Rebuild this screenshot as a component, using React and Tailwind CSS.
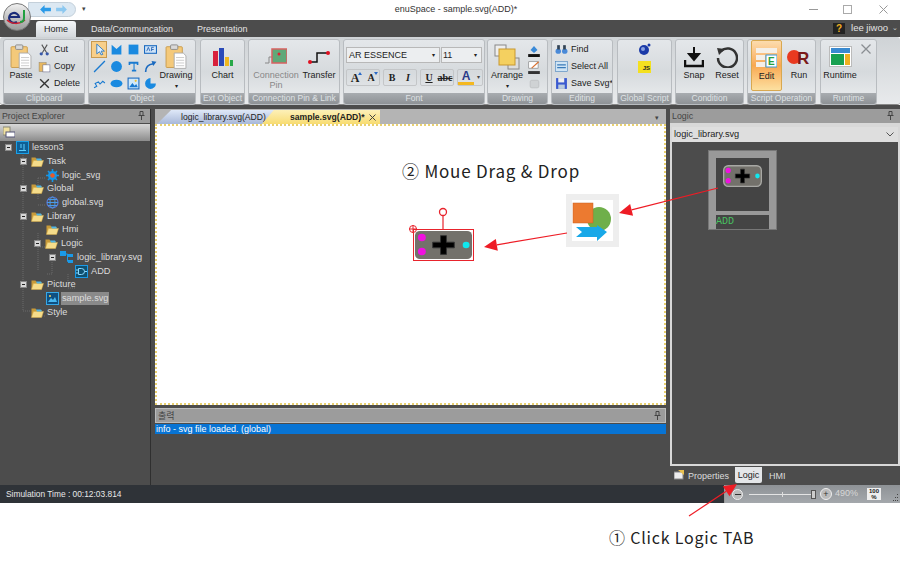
import React from "react";

const Clip = ({ s = 30 }) => (
  <svg width={s} height={s * 1.15} viewBox="0 0 24 28">
    <rect x="1" y="3" width="18" height="23" rx="1" fill="#f4c97a" stroke="#c89a4a" />
    <rect x="6" y="1" width="8" height="5" rx="1" fill="#d9d9d9" stroke="#888" />
    <path d="M10 10h10l3 3v14H10z" fill="#fff" stroke="#aaa" />
    <path d="M12 15h9M12 18h9M12 21h9M12 24h9" stroke="#c8c8c8" />
  </svg>
);

const Folder = () => (
  <svg width="13" height="11" viewBox="0 0 13 11" className="shrink-0">
    <path d="M0.5 1.5h4l1 1.5h5v7h-10z" fill="#c79a3a" />
    <path d="M2.5 4.5h10l-2 6h-10z" fill="#f5dc8a" stroke="#d8ae4a" strokeWidth=".5" />
    <path d="M5 2.5h5l1 2H6z" fill="#4fb6e8" />
  </svg>
);

const Pin = () => (
  <svg width="7" height="9" viewBox="0 0 7 9" fill="none" stroke="#444" className="mt-[2px]">
    <path d="M2 .5h3v4H2zM.5 4.500h6M3.500 5v4" />
  </svg>
);

const IcoProject = () => (
  <svg width="13" height="13" viewBox="0 0 13 13" className="shrink-0">
    <rect x=".5" y=".5" width="12" height="12" fill="#0f5f95" stroke="#19a0e8" />
    <path d="M3 9.500h7M8 3v6.500M5 3v4" stroke="#5fd0ff" strokeWidth="1" fill="none" />
  </svg>
);
const IcoTask = () => (
  <svg width="13" height="13" viewBox="0 0 13 13" className="shrink-0">
    <circle cx="6.5" cy="6.5" r="4.5" fill="#1596e8" />
    <path d="M6.5 0v13M0 6.500h13M2 2l9 9M11 2l-9 9" stroke="#1596e8" strokeWidth="1.6" />
    <circle cx="6.5" cy="6.5" r="2.3" fill="#e85a2a" />
  </svg>
);
const IcoGlobe = () => (
  <svg width="13" height="13" viewBox="0 0 13 13" fill="none" stroke="#4a9ae8" className="shrink-0">
    <circle cx="6.5" cy="6.5" r="5.5" stroke="#5a78d8" strokeWidth="1.2" />
    <ellipse cx="6.5" cy="6.5" rx="2.5" ry="5.5" />
    <path d="M1 6.500h11M2 3.500h9M2 9.500h9" />
  </svg>
);
const IcoLib = () => (
  <svg width="14" height="13" viewBox="0 0 14 13" className="shrink-0">
    <rect x="0" y="0" width="6" height="5" fill="#1a9ae8" />
    <rect x="8" y="3" width="5" height="3" fill="#1a9ae8" />
    <rect x="8" y="9" width="5" height="3" fill="#1a9ae8" />
    <path d="M6 3h1.500v7.500H8" stroke="#1a9ae8" fill="none" />
  </svg>
);
const IcoAdd = () => (
  <svg width="13" height="13" viewBox="0 0 13 13" fill="none" className="shrink-0">
    <rect x=".5" y=".5" width="12" height="12" fill="#0f5070" stroke="#1a9ae8" />
    <path d="M3.500 3.500h3a3 3 0 010 6h-3zM1 5h2.500M1 8h2.500M9.500 6.500H12" stroke="#8ad8ff" />
  </svg>
);
const IcoPic = () => (
  <svg width="13" height="13" viewBox="0 0 13 13" className="shrink-0">
    <rect x=".5" y=".5" width="12" height="12" fill="#0f4f80" stroke="#35a8e8" />
    <path d="M2 10l3-4 2 2 2-3 2 5z" fill="#48b8f0" />
    <circle cx="4" cy="4" r="1" fill="#f0d060" />
  </svg>
);

const TREE = [
  { t: "lesson3", p: "pl-[5px]", box: true, i: <IcoProject /> },
  { t: "Task", p: "pl-[20px]", box: true, i: <Folder /> },
  { t: "logic_svg", p: "pl-[46px]", i: <IcoTask /> },
  { t: "Global", p: "pl-[20px]", box: true, i: <Folder /> },
  { t: "global.svg", p: "pl-[46px]", i: <IcoGlobe /> },
  { t: "Library", p: "pl-[20px]", box: true, i: <Folder /> },
  { t: "Hmi", p: "pl-[46px]", i: <Folder /> },
  { t: "Logic", p: "pl-[34px]", box: true, i: <Folder /> },
  { t: "logic_library.svg", p: "pl-[49px]", box: true, i: <IcoLib /> },
  { t: "ADD", p: "pl-[75px]", i: <IcoAdd /> },
  { t: "Picture", p: "pl-[20px]", box: true, i: <Folder /> },
  { t: "sample.svg", p: "pl-[46px]", i: <IcoPic />, sel: true },
  { t: "Style", p: "pl-[31px]", i: <Folder /> },
];

const Group = ({ w, label, children, cls = "" }) => (
  <div className={`${w} ${cls} h-[66px] flex flex-col rounded-[3px] border border-[#b8bcc0] bg-gradient-to-b from-[#e4e7ea] via-[#d6dadd] to-[#eceef0] overflow-hidden`}>
    <div className="flex-1 flex min-h-0">{children}</div>
    <div className="h-[11px] shrink-0 bg-gradient-to-b from-[#a8acb0] to-[#8e9296] text-[#dfe2e5] text-[8.500px] leading-[11px] text-center whitespace-nowrap">{label}</div>
  </div>
);

const Big = ({ icon, label, sub, muted, w = "w-[40px]", cls = "" }) => (
  <div className={`${w} ${cls} shrink-0 flex flex-col items-center pt-[4px] text-[9px] leading-[10px] ${muted ? "text-[#888]" : "text-[#222]"}`}>
    <div className="h-[25px] flex items-center justify-center">{icon}</div>
    <div className="mt-[1px] whitespace-nowrap">{label}</div>
    {sub && <div className="whitespace-nowrap">{sub}</div>}
  </div>
);

const Small = ({ icon, label }) => (
  <div className="h-[17px] flex items-center gap-[3px] text-[9px] text-[#222] whitespace-nowrap">
    <span className="w-[13px] flex justify-center">{icon}</span>
    {label}
  </div>
);

const I = ({ children, s = 13, v = 24 }) => <svg width={s} height={s} viewBox={`0 0 ${v} ${v}`}>{children}</svg>;

const Obj = ({ children, on }) => (
  <div className={`w-[16px] h-[17px] flex items-center justify-center ${on ? "bg-[#f8cf8a] border border-[#c89a50]" : ""}`}>{children}</div>
);

const FontBtn = ({ children, cls = "", up, down }) => (
  <span className={`relative w-[16px] h-[15px] flex items-center justify-center text-[10px] font-bold text-[#222] ${cls}`}>
    {children}
    {up && <svg className="absolute right-[1px] top-[2px]" width="4" height="3"><path d="M0 3l2-3 2 3z" fill="#2a6ac8" /></svg>}
    {down && <svg className="absolute right-[1px] top-[2px]" width="4" height="3"><path d="M0 0l2 3 2-3z" fill="#2a6ac8" /></svg>}
  </span>
);

const NodeArt = ({ big }) => (
  <svg width="100%" height="100%" viewBox="0 0 60 32" preserveAspectRatio="none">
    <rect x="1" y="1" width="58" height="30" rx={big ? 5 : 7} fill="#73716b" stroke={big ? "none" : "#a8a8a4"} strokeWidth="2" />
    <circle cx="8" cy="8" r="4" fill="#f010e0" />
    <circle cx="8" cy="23" r="4" fill="#f010e0" />
    <circle cx="53" cy="16" r="3.500" fill="#10e8ee" />
    <path d="M27 6h6v7h8v6h-8v7h-6v-7h-8v-6h8z" fill="#000" stroke="#333" />
  </svg>
);

const Arrow = ({ x1, y1, x2, y2 }) => {
  const a = Math.atan2(y2 - y1, x2 - x1);
  const L = 13, W = 6;
  const bx = x2 - L * Math.cos(a), by = y2 - L * Math.sin(a);
  const nx = -Math.sin(a) * W, ny = Math.cos(a) * W;
  return (
    <g>
      <line x1={x1} y1={y1} x2={bx} y2={by} stroke="#ee1c25" strokeWidth="1.2" />
      <polygon points={`${x2},${y2} ${bx + nx},${by + ny} ${bx - nx},${by - ny}`} fill="#ee1c25" />
    </g>
  );
};

export default function App() {
  return (
    <div className="relative w-[900px] h-[561px] bg-white overflow-hidden font-['Liberation_Sans',sans-serif]">
      {/* title bar */}
      <div className="relative h-[20px] flex items-center justify-center text-[9px] text-[#333]">
        <div className="ml-[12px]">enuSpace - sample.svg(ADD)*</div>
        <div className="absolute left-[28px] top-[2px] w-[48px] h-[15px] rounded-r-full bg-[#dce8f2] border border-[#c4d0da] flex items-center gap-[5px] pl-[11px]">
          <svg width="11" height="9" viewBox="0 0 12 10"><path d="M0 5l5-5v3h7v4H5v3z" fill="#2a9ae8" /></svg>
          <svg width="11" height="9" viewBox="0 0 12 10"><path d="M12 5L7 0v3H0v4h7v3z" fill="#8cc8f0" /></svg>
        </div>
        <div className="absolute left-[82px] top-[5px] text-[7px] leading-[8px] text-[#444]">▾</div>
        <svg className="absolute left-[809px] top-[9px]" width="9" height="2"><rect width="9" height="1" fill="#999" /></svg>
        <div className="absolute left-[843px] top-[5px] w-[9px] h-[9px] border border-[#aaa]" />
        <svg className="absolute left-[879px] top-[5px]" width="9" height="9" viewBox="0 0 9 9"><path d="M.5.5l8 8M8.500.5l-8 8" stroke="#999" /></svg>
      </div>

      {/* tabs row */}
      <div className="relative h-[17px] bg-[#4c4c4c] flex items-end text-[9px] text-[#e4e4e4]">
        <div className="ml-[36px] w-[40px] h-[16px] bg-gradient-to-b from-[#f4f6f8] to-[#d4d8dc] rounded-t-[3px] text-[#222] text-center leading-[16px]">Home</div>
        <div className="ml-[15px] h-[16px] leading-[16px] whitespace-nowrap">Data/Communcation</div>
        <div className="ml-[24px] h-[16px] leading-[16px] whitespace-nowrap">Presentation</div>
        <div className="ml-auto mr-[12px] h-[17px] flex items-center gap-[6px]">
          <span className="w-[12px] h-[11px] bg-[#222] text-[#f0b020] font-bold text-[10px] leading-[11px] text-center">?</span>
          <span className="text-[9.500px]">lee jiwoo</span>
        </div>
        <div className="absolute right-[2px] top-[3px] text-[7px] leading-[10px] text-[#ccc]">⌄</div>
      </div>

      {/* ribbon */}
      <div className="h-[68px] bg-gradient-to-b from-[#cfd3d6] to-[#e8eaec] rounded-[3px] flex pt-[2px] border-b border-[#888]">
        <Group w="w-[82px]" cls="ml-[3px]" label="Clipboard">
          <Big w="w-[34px]" icon={<Clip s={22} />} label="Paste" />
          <div className="pt-[1px]">
            <Small label="Cut" icon={<I><path d="M7 3l9 15M17 3L8 18" stroke="#555" strokeWidth="2" /><circle cx="6" cy="20" r="3" fill="#3858a8" /><circle cx="17" cy="20" r="3" fill="#3858a8" /></I>} />
            <Small label="Copy" icon={<I><rect x="2" y="5" width="13" height="16" fill="#e8b860" stroke="#986" /><rect x="9" y="9" width="13" height="13" fill="#fff" stroke="#668" /></I>} />
            <Small label="Delete" icon={<I><path d="M4 4l16 16M20 4L4 20" stroke="#333" strokeWidth="2.500" /></I>} />
          </div>
        </Group>
        <Group w="w-[108px]" cls="ml-[3px]" label="Object">
          <div className="grid grid-cols-4 gap-x-[1px] ml-[2px] mt-[1px] content-start h-[52px]">
            <Obj on><I><path d="M7 2v18l5-4 3 6 3-1-3-6h6z" fill="#dfefff" stroke="#1a70c0" strokeWidth="1.500" /></I></Obj>
            <Obj><I><path d="M3 3l9 8 9-8v18H3z" fill="#1a8ae0" /></I></Obj>
            <Obj><I><rect x="3" y="3" width="18" height="18" fill="#1a8ae0" /></I></Obj>
            <Obj><I><rect x="1" y="5" width="22" height="14" fill="#cfe4f8" stroke="#1a6ac0" strokeWidth="2" /><path d="M5 15l3-7 3 7M14 8v7M14 8h4M14 12h4" stroke="#1a5ab0" strokeWidth="1.500" fill="none" /></I></Obj>
            <Obj><I><path d="M2 22L22 2" stroke="#1a7ad0" strokeWidth="2.500" /></I></Obj>
            <Obj><I><circle cx="12" cy="12" r="10" fill="#1a8ae0" /></I></Obj>
            <Obj><I><path d="M3 3h18v6h-3V7h-4v11h3v3H9v-3h3V7H6v2H3z" fill="#1a7ad0" /></I></Obj>
            <Obj><I><path d="M3 22c0-10 5-14 14-15" stroke="#1a6ac0" strokeWidth="3" fill="none" /><path d="M23 3l-9-1 3 9z" fill="#1a6ac0" /></I></Obj>
            <Obj><I><path d="M2 20l5-3-3-5 6-3 3 4 5-5 4 3" stroke="#1a7ad0" strokeWidth="2" fill="none" /></I></Obj>
            <Obj><I><ellipse cx="12" cy="12" rx="11" ry="7" fill="#1a8ae0" /></I></Obj>
            <Obj><I><rect x="2" y="2" width="20" height="20" fill="#cfe8fa" stroke="#1a6ac0" strokeWidth="2" /><path d="M4 19l6-8 4 5 3-3 3 6z" fill="#1a7ad0" /><circle cx="16" cy="7" r="2" fill="#f0c030" /></I></Obj>
            <Obj><I><path d="M12 2a10 10 0 1010 10H12z" fill="#1a8ae0" /></I></Obj>
          </div>
          <Big w="w-[36px]" icon={<Clip s={22} />} label="Drawing" sub={<span className="text-[6px]">▾</span>} />
        </Group>
        <Group w="w-[45px]" cls="ml-[4px]" label="Ext Object">
          <Big w="w-full" icon={<svg width="20" height="18" viewBox="0 0 20 18"><rect x="0" y="3" width="5" height="15" fill="#d8203c" /><rect x="6" y="0" width="5" height="18" fill="#2a4ab8" /><rect x="12" y="9" width="4" height="9" fill="#f0b820" /><rect x="17" y="12" width="3" height="6" fill="#28a848" /></svg>} label="Chart" />
        </Group>
        <Group w="w-[92px]" cls="ml-[3px]" label="Connection Pin & Link">
          <Big w="w-[48px]" cls="ml-[3px]" muted icon={<svg width="22" height="18" viewBox="0 0 22 18"><path d="M0 15h4V9h3" stroke="#888" fill="none" /><rect x="7" y="1" width="15" height="14" fill="#5fa878" stroke="#d86060" strokeWidth="1.500" /><circle cx="14" cy="6" r="1.500" fill="#e02030" /></svg>} label="Connection" sub="Pin" />
          <Big w="w-[38px]" icon={<svg width="22" height="14" viewBox="0 0 22 14"><path d="M2 12h7V3h11" stroke="#111" strokeWidth="1.500" fill="none" /><circle cx="2" cy="12" r="2" fill="#e01020" /><circle cx="20" cy="3" r="2" fill="#e01020" /></svg>} label="Transfer" />
        </Group>
        <Group w="w-[142px]" cls="ml-[3px]" label="Font">
          <div className="pl-[2px] pt-[7px]">
            <div className="flex gap-[1px]">
              <div className="w-[94px] h-[16px] bg-[#eceef0] border border-[#b8b8b8] text-[9px] leading-[14px] pl-[2px] text-[#222] flex justify-between pr-[4px]"><span>AR ESSENCE</span><span className="text-[6px]">▾</span></div>
              <div className="w-[41px] h-[16px] bg-[#eceef0] border border-[#b8b8b8] text-[9px] leading-[14px] pl-[1px] text-[#222] flex justify-between pr-[4px]"><span>11</span><span className="text-[6px]">▾</span></div>
            </div>
            <div className="flex gap-[3px] mt-[6px] font-['Liberation_Serif',serif]">
              <div className="flex border border-[#c4c6c8] rounded-[2px]"><FontBtn cls="text-[12px]" up>A</FontBtn><FontBtn down>A</FontBtn></div>
              <div className="flex border border-[#c4c6c8] rounded-[2px]"><FontBtn>B</FontBtn><FontBtn cls="italic">I</FontBtn></div>
              <div className="flex border border-[#c4c6c8] rounded-[2px]"><FontBtn cls="underline">U</FontBtn><FontBtn cls="line-through">abc</FontBtn></div>
              <div className="flex border border-[#c4c6c8] rounded-[2px] w-[26px] items-center"><span className="w-[16px] text-center text-[12px] font-bold leading-[12px] text-[#2a3a88] border-b-[3px] border-[#f4b820] font-['Liberation_Sans',sans-serif]">A</span><span className="text-[6px] ml-[3px] text-[#444]">▾</span></div>
            </div>
          </div>
        </Group>
        <Group w="w-[61px]" cls="ml-[2px]" label="Drawing">
          <Big w="w-[38px]" icon={<svg width="26" height="26" viewBox="0 0 26 26"><rect x="1" y="1" width="11" height="11" fill="#eee" stroke="#888" /><rect x="14" y="14" width="11" height="11" fill="#ddd" stroke="#888" /><rect x="5" y="5" width="16" height="16" fill="#f4d060" stroke="#c89830" /></svg>} label="Arrange" sub={<span className="text-[6px]">▾</span>} />
          <div className="pt-[1px] flex flex-col">
            <Obj><I s={14}><path d="M6 12l6-7 6 7-6 5z" fill="#3a8ad8" /><rect x="2" y="19" width="20" height="5" fill="#111" /></I></Obj>
            <Obj><I s={14}><rect x="3" y="3" width="16" height="11" fill="#fff" stroke="#777" /><path d="M8 14L20 3" stroke="#d87030" strokeWidth="2" /><rect x="2" y="19" width="20" height="5" fill="#333" /></I></Obj>
            <Obj><I s={13}><rect x="4" y="6" width="16" height="14" rx="3" fill="#cfd2d4" stroke="#b0b2b4" /></I></Obj>
          </div>
        </Group>
        <Group w="w-[62px]" cls="ml-[3px]" label="Editing">
          <div className="pl-[3px] pt-[1px]">
            <Small label="Find" icon={<I><circle cx="6" cy="15" r="5" fill="#4a8ad8" /><circle cx="18" cy="15" r="5" fill="#4a8ad8" /><rect x="4" y="4" width="5" height="8" fill="#345" /><rect x="15" y="4" width="5" height="8" fill="#345" /></I>} />
            <Small label="Select All" icon={<I><rect x="1" y="3" width="22" height="18" fill="#cfe4f4" stroke="#3a7ab8" /><path d="M4 9h16M4 14h16" stroke="#3a7ab8" strokeWidth="2" /></I>} />
            <Small label="Save Svg*" icon={<I><rect x="2" y="2" width="20" height="20" fill="#3a5ad0" /><rect x="6" y="2" width="11" height="8" fill="#eee" /><rect x="6" y="14" width="12" height="8" fill="#bcd" /></I>} />
          </div>
        </Group>
        <Group w="w-[55px]" cls="ml-[4px]" label="Global Script">
          <div className="w-full flex flex-col items-center pt-[3px] gap-[6px]">
            <svg width="12" height="12" viewBox="0 0 12 12"><circle cx="5" cy="7" r="5" fill="#1a3aa8" /><circle cx="4" cy="6" r="2" fill="#88a0e0" /><circle cx="10" cy="2" r="1.500" fill="#1a3aa8" /></svg>
            <div className="w-[13px] h-[12px] bg-[#f4e020] text-[6px] font-bold leading-[14px] text-right pr-[1px] text-[#222]">JS</div>
          </div>
        </Group>
        <Group w="w-[69px]" cls="ml-[3px]" label="Condition">
          <Big w="w-[36px]" icon={<svg width="20" height="22" viewBox="0 0 20 22"><path d="M10 1v11M5 8l5 6 5-6z" fill="#111" stroke="#111" strokeWidth="2" /><path d="M1 14v6h18v-6" stroke="#111" strokeWidth="2.500" fill="none" /></svg>} label="Snap" />
          <Big w="w-[30px]" icon={<svg width="22" height="22" viewBox="0 0 22 22" fill="none"><path d="M5 5a9.500 9.500 0 11-3 7" stroke="#333" strokeWidth="2.500" /><path d="M1 2l8 1-6 6z" fill="#333" /></svg>} label="Reset" />
        </Group>
        <Group w="w-[69px]" cls="ml-[3px]" label="Script Operation">
          <div className="ml-[3px] w-[31px] h-[51px] rounded-[2px] border border-[#d8a850] bg-gradient-to-b from-[#fcdcae] via-[#f8a850] to-[#fce0a0]">
            <Big w="w-full" icon={<svg width="21" height="20" viewBox="0 0 21 20"><rect width="21" height="5" fill="#f4efe8" /><rect y="7" width="9" height="5" fill="#f4efe8" /><rect y="14" width="9" height="5" fill="#f4efe8" /><rect x="10" y="7" width="11" height="12" fill="#fff" stroke="#3a9ad8" /><text x="12" y="17" fontSize="10" fontWeight="bold" fill="#28a040">E</text></svg>} label="Edit" />
          </div>
          <Big w="w-[30px]" cls="ml-[2px]" icon={<svg width="24" height="18" viewBox="0 0 24 18"><circle cx="7" cy="9" r="7" fill="#e83a20" /><text x="10" y="16" fontSize="17" fontWeight="bold" fill="#7a1a1a" fontFamily="Liberation Sans">R</text></svg>} label="Run" />
        </Group>
        <Group w="w-[57px]" cls="ml-[4px]" label="Runtime">
          <Big w="w-[38px]" icon={<svg width="23" height="21" viewBox="0 0 23 21"><rect x=".5" y=".5" width="22" height="20" fill="#fff" stroke="#bbb" /><rect x="2" y="2" width="19" height="5" fill="#3a8ad0" /><rect x="2" y="8" width="13" height="11" fill="#18a050" /><rect x="16" y="8" width="5" height="11" fill="#f0b020" /></svg>} label="Runtime" />
          <svg className="ml-[2px] mt-[4px]" width="10" height="10" viewBox="0 0 10 10"><path d="M.5.5l9 9M9.500.5l-9 9" stroke="#8a8e92" strokeWidth="1.300" /></svg>
        </Group>
      </div>

      {/* main */}
      <div className="h-[380px] bg-[#4c4c4c] flex pt-[4px] text-[8.800px]">
        {/* explorer */}
        <div className="w-[151px] shrink-0 flex flex-col border-r border-[#2f2f2f]">
          <div className="h-[14px] bg-[#9c9c9c] text-[#444] leading-[14px] pl-[2px] flex justify-between pr-[5px]"><span>Project Explorer</span><Pin /></div>
          <div className="h-[17px] mt-[1px] bg-gradient-to-b from-[#d8d8d8] to-[#8c8c8c] pl-[3px] pt-[2px]">
            <svg width="12" height="12" viewBox="0 0 12 12"><rect x="0" y="1" width="7" height="8" fill="#f0e0a0" stroke="#887" /><rect x="3" y="6" width="9" height="5" fill="#fff" stroke="#557" /></svg>
          </div>
          <div className="relative text-[#dcdcdc] text-[9.200px]">
            <svg className="absolute left-0 top-0" width="90" height="185" fill="none" stroke="#6a6a6a" strokeDasharray="1 1">
              <path d="M23 10v160M38 37v21M23 170h8M38 92v38M38 106h8M52 119v14M52 133h-6M68 133v14M68 147h7M38 175h8M38 37h8M38 64h8" />
            </svg>
            {TREE.map((r) => (
              <div key={r.t} className={`relative h-[13.7px] flex items-center ${r.p}`}>
                {r.box && <span className="w-[7px] h-[7px] mr-[4px] bg-[#d8d8d8] border border-[#888] shrink-0 flex items-center justify-center"><span className="w-[3px] h-[1px] bg-[#222]" /></span>}
                {r.i}
                <span className={`ml-[2px] leading-[13px] px-[1px] whitespace-nowrap ${r.sel ? "bg-[#8a8a8a]" : ""}`}>{r.t}</span>
              </div>
            ))}
          </div>
        </div>

        {/* center */}
        <div className="ml-[4px] w-[511px] shrink-0 flex flex-col">
          <div className="relative h-[15px] pl-[2px] flex items-end bg-[#b4b4b4] text-[8.600px]">
            <div className="w-[118px] h-[14px] shrink-0 bg-gradient-to-b from-[#dfe8f8] to-[#a8b8d8] text-[#222] leading-[14px] pl-[24px] [clip-path:polygon(12%_0,100%_0,100%_100%,0_100%)] whitespace-nowrap">logic_library.svg(ADD)</div>
            <div className="relative w-[118px] h-[14px] shrink-0 -ml-[13px] bg-gradient-to-b from-[#fdf0b8] to-[#f8dc70] font-bold text-[#222] leading-[14px] pl-[28px] [clip-path:polygon(10%_0,100%_0,100%_100%,0_100%)] flex whitespace-nowrap">sample.svg(ADD)*<svg className="ml-[4px] mt-[4px]" width="7" height="7" viewBox="0 0 7 7"><path d="M.5.5l6 6M6.500.5l-6 6" stroke="#444" /></svg></div>
            <span className="ml-auto mr-[7px] mb-[2px] text-[7px] text-[#444] leading-[8px]">▾</span>
          </div>
          <div className="relative h-[281px] bg-white border-2 border-dotted border-[#e8d070]">
            <svg className="absolute left-[254px] top-[88px] overflow-visible" width="12" height="18" fill="none" stroke="#e8232c">
              <circle cx="32" cy="-2" r="3.500" fill="#fff" strokeWidth="1.300" />
              <path d="M32 2v13" strokeWidth="1.200" />
              <circle cx="2" cy="15" r="3.500" strokeWidth="1" />
              <path d="M-2 15h8M2 11v8" strokeWidth="1" />
            </svg>
            <div className="absolute left-[256px] top-[103px] w-[61px] h-[32px] border-[1.500px] border-[#e8232c]">
              <NodeArt big />
            </div>
            <div className="absolute left-[409px] top-[68px] w-[53px] h-[53px] bg-white border-[6px] border-[#eeeeee]">
              <svg width="41" height="41" viewBox="0 0 41 41">
                <circle cx="27" cy="19" r="12" fill="#6faf4a" />
                <path d="M4 27H25V25L35 32 25 41V37H4L10 32z" fill="#18a8e8" />
                <rect x="1" y="3" width="20" height="20" fill="#ec7a30" stroke="#c86020" strokeWidth=".5" />
              </svg>
            </div>
          </div>
          <div className="mt-[3px] h-[15px] bg-[#9c9c9c] border border-[#bbb] text-[#444] leading-[13px] pl-[2px] flex justify-between pr-[4px] font-['Noto_Sans_CJK_KR','Liberation_Sans',sans-serif] text-[9px]"><span>출력</span><Pin /></div>
          <div className="mt-[1px] h-[10px] bg-[#0874d4] text-white text-[9px] leading-[10px] pl-[1px]">info - svg file loaded. (global)</div>
        </div>

        {/* right */}
        <div className="ml-[4px] w-[230px] shrink-0 flex flex-col">
          <div className="h-[14px] bg-[#9c9c9c] text-[#444] leading-[14px] pl-[2px] flex justify-between pr-[6px]"><span>Logic</span><Pin /></div>
          <div className="flex-1 border-2 border-t-[4px] border-[#d8d8d8] bg-[#4c4c4c] flex flex-col">
            <div className="h-[15px] bg-[#dedede] text-[#222] text-[9.200px] leading-[15px] pl-[2px] flex justify-between pr-[4px]"><span>logic_library.svg</span><svg className="mt-[5px]" width="8" height="5" viewBox="0 0 8 5" fill="none" stroke="#555"><path d="M.5.5L4 4 7.500.5" /></svg></div>
            <div className="relative flex-1">
              <div className="absolute left-[36px] top-[8px] w-[69px] h-[80px] bg-[#999] border border-[#777] px-[7px] pt-[7px]">
                <div className="relative h-[53px] bg-[#444]">
                  <div className="absolute left-[7px] top-[7px] w-[39px] h-[22px]"><NodeArt /></div>
                </div>
                <div className="mt-[4px] h-[14px] bg-[#444] text-[#48c060] font-['Liberation_Mono',monospace] text-[10px] leading-[14px]">ADD</div>
              </div>
            </div>
          </div>
          <div className="h-[19px] flex items-start text-[9px] text-[#dcdcdc] pl-[4px] pt-[1px]">
            <svg className="mt-[2px]" width="11" height="11" viewBox="0 0 11 11"><rect x="0" y="3" width="9" height="7" fill="#eee" stroke="#888" /><path d="M4 1h6v5" fill="#e8c050" /></svg>
            <span className="ml-[3px] mt-[3px]">Properties</span>
            <span className="ml-[6px] w-[27px] h-[16px] bg-[#e4e6e8] rounded-b-[2px] text-[#222] text-center leading-[17px]">Logic</span>
            <span className="ml-[7px] mt-[3px]">HMI</span>
          </div>
        </div>
      </div>

      {/* status */}
      <div className="h-[18px] flex">
        <div className="w-[725px] bg-[#2f3338] text-[#e8e8e8] text-[8.400px] leading-[18px] pl-[6px] border-r border-[#999]">Simulation Time : 00:12:03.814</div>
        <div className="relative flex-1 bg-gradient-to-b from-[#8e9296] to-[#a4a8ac] flex items-center text-[#d8d8d8] text-[9px] pl-[7px]">
          <span className="w-[11px] h-[11px] rounded-full bg-[#bbb] border border-[#eee] flex items-center justify-center"><span className="w-[6px] h-[1px] bg-[#333]" /></span>
          <div className="relative ml-[6px] w-[66px] h-[1px] bg-[#e4e4e4]">
            <span className="absolute left-[33px] -top-[2px] w-[1px] h-[5px] bg-[#ddd]" />
            <span className="absolute left-[62px] -top-[4px] w-[5px] h-[9px] bg-[#ccc] border border-[#555]" />
          </div>
          <span className="ml-[5px] w-[12px] h-[12px] rounded-full bg-[#bbb] border border-[#eee] flex items-center justify-center text-[#333] text-[9px] leading-[9px]">+</span>
          <span className="ml-[3px]">490%</span>
          <span className="ml-[9px] w-[14px] h-[12px] bg-[#eee] text-[#222] text-[6px] font-bold leading-[6px] text-center">100<br />%</span>
          <svg className="absolute right-[1px] bottom-[1px]" width="8" height="8" fill="#444"><rect x="6" y="0" width="1" height="1" /><rect x="4" y="3" width="1" height="1" /><rect x="6" y="3" width="1" height="1" /><rect x="2" y="6" width="1" height="1" /><rect x="4" y="6" width="1" height="1" /><rect x="6" y="6" width="1" height="1" /></svg>
        </div>
      </div>

      {/* notes */}
      <div className="relative h-[58px] font-['Noto_Sans_CJK_KR','Liberation_Sans',sans-serif]">
        <div className="absolute left-[609px] top-[23px] text-[16px] leading-[22px] tracking-[0.8px] text-[#222] whitespace-nowrap">① Click Logic TAB</div>
      </div>
      <div className="absolute left-[402px] top-[160px] text-[17px] leading-[22px] tracking-[0.8px] text-[#222] whitespace-nowrap font-['Noto_Sans_CJK_KR','Liberation_Sans',sans-serif]">② Moue Drag &amp; Drop</div>

      {/* app logo */}
      <div className="absolute left-[3px] top-[3px] w-[28px] h-[28px] rounded-full bg-gradient-to-b from-[#f0f0f0] to-[#9a9a9a] border border-[#777] flex items-center justify-center">
        <svg width="22" height="18" viewBox="0 0 22 18" fill="none">
          <path d="M3 9h10a5 5 0 10-2 5" stroke="#1a2a78" strokeWidth="2.200" />
          <path d="M1 12C5 16 13 17 19 12" stroke="#d02030" strokeWidth="1.500" />
          <path d="M18 2v8c0 3-2 4-4 4" stroke="#20a040" strokeWidth="2" />
        </svg>
      </div>

      <svg className="absolute left-0 top-0 pointer-events-none" width="900" height="561">
        <Arrow x1={718} y1={188} x2={619} y2={213} />
        <Arrow x1={567} y1={233} x2={484} y2={247} />
        <Arrow x1={689} y1={516} x2={737} y2={484} />
      </svg>
    </div>
  );
}
